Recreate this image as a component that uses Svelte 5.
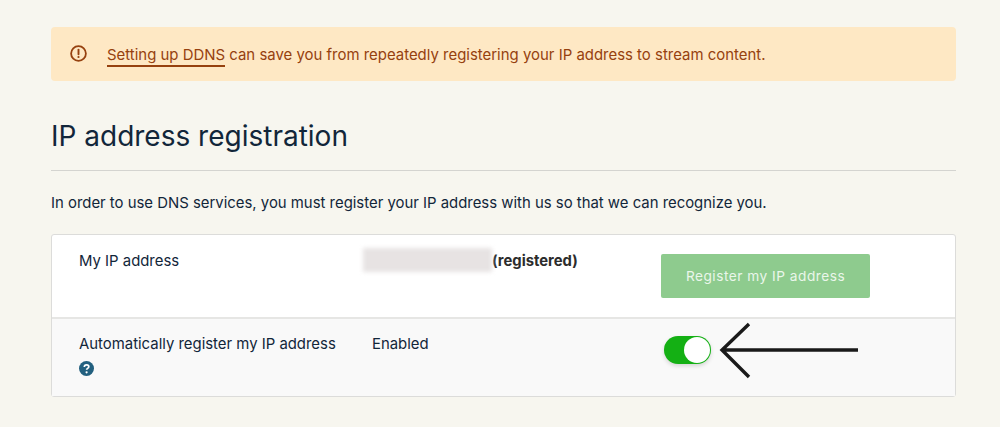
<script lang="ts">
  // DNS settings page: DDNS notice, then the IP registration table.
  const title = 'IP address registration';
</script>

<main class="page">
  <div class="notice">
    <svg class="notice-icon" width="17" height="17" viewBox="0 0 17 17" aria-hidden="true">
      <circle cx="8.5" cy="8.5" r="7.4" fill="none" stroke="currentColor" stroke-width="1.8" />
      <path d="M8.5 4.6v4.6" stroke="currentColor" stroke-width="1.9" stroke-linecap="round" />
      <circle cx="8.5" cy="12" r="1.1" fill="currentColor" />
    </svg>
    <p><a href="#ddns">Setting up DDNS</a> can save you from repeatedly registering your IP address to stream content.</p>
  </div>

  <h1>{title}</h1>
  <p class="intro">In order to use DNS services, you must register your IP address with us so that we can recognize you.</p>

  <div class="table">
    <div class="row">
      <div class="label">My IP address</div>
      <div class="value registered">
        <span class="blurred"></span><strong>(registered)</strong>
      </div>
      <div class="action">
        <button type="button" disabled>Register my IP address</button>
      </div>
    </div>
    <div class="row alt">
      <div class="label">
        Automatically register my IP address
        <svg class="help" width="15" height="15" viewBox="0 0 15 15" aria-hidden="true">
          <circle cx="7.5" cy="7.5" r="7.5" fill="#23607f" />
          <path d="M5.3 5.9c0-1.3 1-2.1 2.3-2.1s2.2.8 2.2 1.9c0 1.7-2.2 1.6-2.2 3.1" fill="none" stroke="#fff" stroke-width="1.7" />
          <circle cx="7.6" cy="11.3" r="1.1" fill="#fff" />
        </svg>
      </div>
      <div class="value">Enabled</div>
      <div class="action">
        <span class="toggle"><span class="knob"></span></span>
      </div>
      <svg class="arrow" width="144" height="58" viewBox="0 0 144 58" aria-hidden="true">
        <path d="M142 29H6M33 3 6 29l27 27" fill="none" stroke="#1a1a1a" stroke-width="3.4" />
      </svg>
    </div>
  </div>
</main>

<style>
  :global(body) {
    background: #f7f6ef;
    font-family: Inter, "Liberation Sans", sans-serif;
    color: #12263a;
  }
  .page {
    width: 905px;
    padding: 27px 0 0 51px;
  }
  .notice {
    display: flex;
    align-items: center;
    gap: 20px;
    height: 54px;
    box-sizing: border-box;
    padding: 0 19px;
    background: #fee8c4;
    border-radius: 4px;
    color: #96410f;
    font-size: 14.95px;
  }
  .notice-icon {
    flex: none;
    margin-top: -2px;
  }
  .notice p {
    margin: 2px 0 0;
  }
  .notice a {
    color: inherit;
    text-decoration: none;
    border-bottom: 2px solid #96410f;
    padding-bottom: 1px;
  }
  h1 {
    margin: 38px 0 0;
    padding-bottom: 17px;
    border-bottom: 1px solid #d4d4d0;
    font-size: 28px;
    line-height: 34px;
    font-weight: 400;
  }
  .intro {
    margin: 22px 0 0;
    font-size: 14.9px;
    line-height: 20px;
  }
  .table {
    margin-top: 21px;
    border: 1px solid #dcdcda;
    border-radius: 3px;
    background: #fff;
    font-size: 14.9px;
    line-height: 20px;
  }
  .row {
    position: relative;
    display: grid;
    grid-template-columns: 293px 290px 1fr;
    height: 82px;
    box-sizing: border-box;
    padding: 16px 0 0 27px;
  }
  .row.alt {
    height: 79px;
    border-top: 2px solid #e6e6e4;
    background: #f9f9f9;
    padding-top: 15px;
  }
  .help {
    display: block;
    margin-top: 7px;
  }
  .value {
    display: flex;
    align-items: flex-start;
  }
  .registered {
    margin-left: -9px;
  }
  .blurred {
    display: block;
    width: 129px;
    height: 24px;
    margin-top: -3px;
    background: #e7e3e3;
    filter: blur(2px);
  }
  .value strong {
    font-weight: 700;
    font-size: 14.8px;
    color: #2c2c2c;
  }
  button {
    display: block;
    width: 209px;
    height: 44px;
    margin: 3px 0 0;
    padding: 0;
    border: none;
    border-radius: 2px;
    background: #8ecb8e;
    color: #eaf6ea;
    font: inherit;
    font-size: 13.7px;
    letter-spacing: 0.5px;
  }
  .action {
    margin-left: -1px;
  }
  .toggle {
    display: block;
    position: relative;
    width: 47px;
    height: 28px;
    margin: 2px 0 0 3px;
    box-sizing: border-box;
    border-radius: 14px;
    background: #14b014;
    box-shadow: 0 2px 4px rgba(0, 0, 0, 0.15);
  }
  .knob {
    position: absolute;
    top: 1px;
    right: 1px;
    width: 26px;
    height: 26px;
    border-radius: 50%;
    background: #fff;
  }
  .arrow {
    position: absolute;
    left: 664px;
    top: 2px;
  }
</style>
